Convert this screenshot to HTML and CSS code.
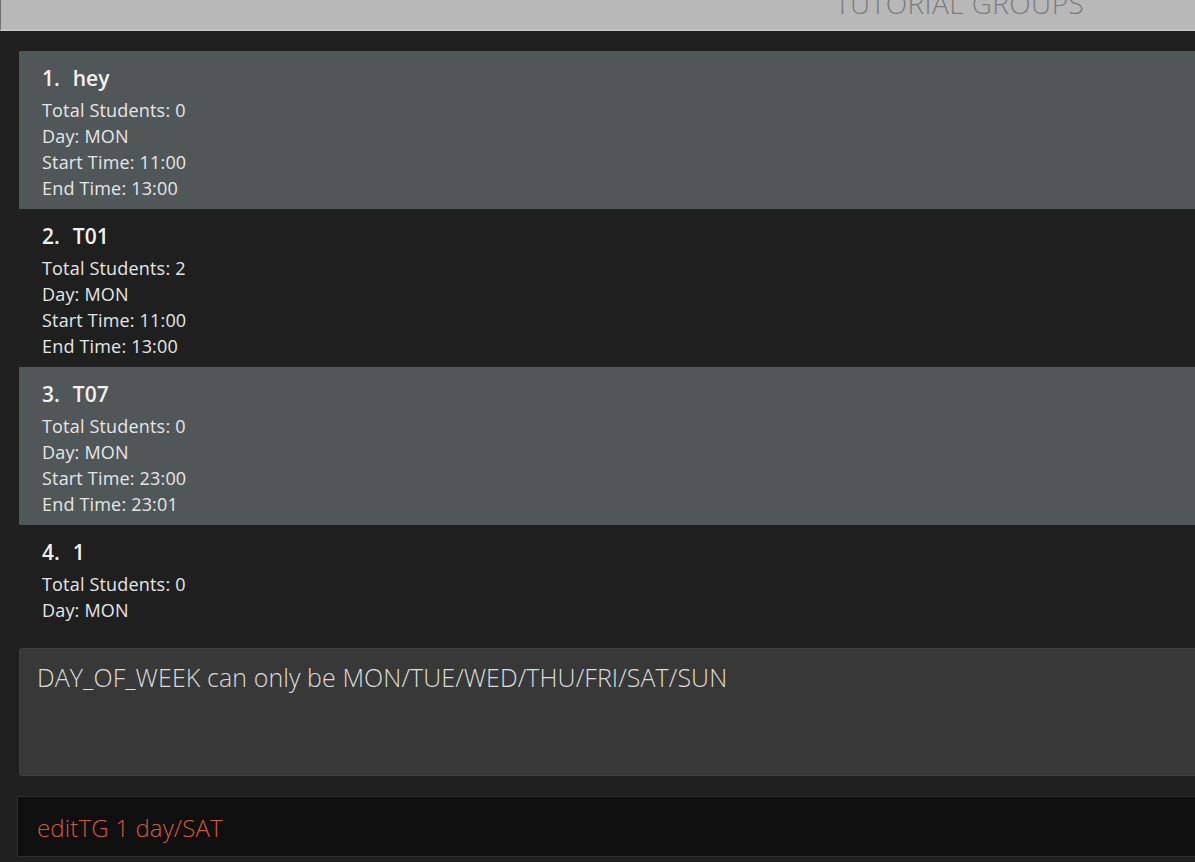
FILE: index.html
```html
<!DOCTYPE html>
<html>
<head>
<meta charset="utf-8">
<link rel="stylesheet" href="styles.css">
</head>
<body>
<div class="app">
  <header class="header"><span class="header-title">TUTORIAL GROUPS</span></header>
  <main class="list-pane">
    <ul class="list">
      <li class="card odd">
        <div class="card-title"><span class="idx">1.</span><span class="name">hey</span></div>
        <div class="field">Total Students: 0</div>
        <div class="field">Day: MON</div>
        <div class="field">Start Time: 11:00</div>
        <div class="field">End Time: 13:00</div>
      </li>
      <li class="card even">
        <div class="card-title"><span class="idx">2.</span><span class="name">T01</span></div>
        <div class="field">Total Students: 2</div>
        <div class="field">Day: MON</div>
        <div class="field">Start Time: 11:00</div>
        <div class="field">End Time: 13:00</div>
      </li>
      <li class="card odd">
        <div class="card-title"><span class="idx">3.</span><span class="name">T07</span></div>
        <div class="field">Total Students: 0</div>
        <div class="field">Day: MON</div>
        <div class="field">Start Time: 23:00</div>
        <div class="field">End Time: 23:01</div>
      </li>
      <li class="card even">
        <div class="card-title"><span class="idx">4.</span><span class="name">1</span></div>
        <div class="field">Total Students: 0</div>
        <div class="field">Day: MON</div>
      </li>
    </ul>
  </main>
  <section class="result">DAY_OF_WEEK can only be MON/TUE/WED/THU/FRI/SAT/SUN</section>
  <div class="command"><span class="command-text">editTG 1 day/SAT</span></div>
</div>
</body>
</html>
```

FILE: styles.css
```css
html, body {
  margin: 0;
  padding: 0;
  background: #1f1f1f;
  height: 100%;
  overflow: hidden;
}

.app {
  display: flex;
  flex-direction: column;
  height: 862px;
  font-family: "Open Sans", "Noto Sans", sans-serif;
}

.header {
  height: 29px;
  background: #b8b8b8;
  border-left: 1px solid #707070;
  border-bottom: 2px solid #c2c2c2;
  overflow: hidden;
  display: flex;
  justify-content: flex-start;
  padding-left: 834px;
}

.header-title {
  font-size: 28px;
  font-weight: 300;
  color: #7d7d7d;
  line-height: 28px;
  margin-top: -11px;
  letter-spacing: 0.4px;
}

.list-pane {
  padding: 20px 0 0 19px;
  height: 575px;
  overflow: hidden;
}

.list {
  list-style: none;
  margin: 0;
  padding: 0;
}

.card {
  height: 158px;
  box-sizing: border-box;
  padding: 12px 0 0 23px;
  color: #ededed;
}

.card.odd { background: #515659; }
.card.even { background: #1f1f1f; }

.card-title {
  display: flex;
  gap: 13px;
  font-size: 21px;
  font-weight: 600;
  line-height: 30px;
  color: #f2f2f2;
  margin-bottom: 4px;
}

.field {
  font-size: 18px;
  line-height: 26px;
  color: #e6e6e6;
  letter-spacing: 0.18px;
}

.result {
  margin: 22px 0 0 19px;
  height: 128px;
  box-sizing: border-box;
  background: #383838;
  border: 1px solid #3f3f3f;
  border-right: none;
  border-radius: 3px 0 0 3px;
  padding: 12px 0 0 17px;
  font-size: 25px;
  font-weight: 300;
  color: #dcdcdc;
  line-height: 32px;
  letter-spacing: 0.08px;
}

.command {
  margin: 20px 0 0 17px;
  height: 61px;
  box-sizing: border-box;
  background: #0f0f0f;
  border: 1px solid #2e2e2e;
  border-right: none;
  padding: 15px 0 0 19px;
}

.command-text {
  font-size: 24px;
  font-weight: 300;
  color: #d4583e;
  line-height: 32px;
  letter-spacing: 0.15px;
}
```
